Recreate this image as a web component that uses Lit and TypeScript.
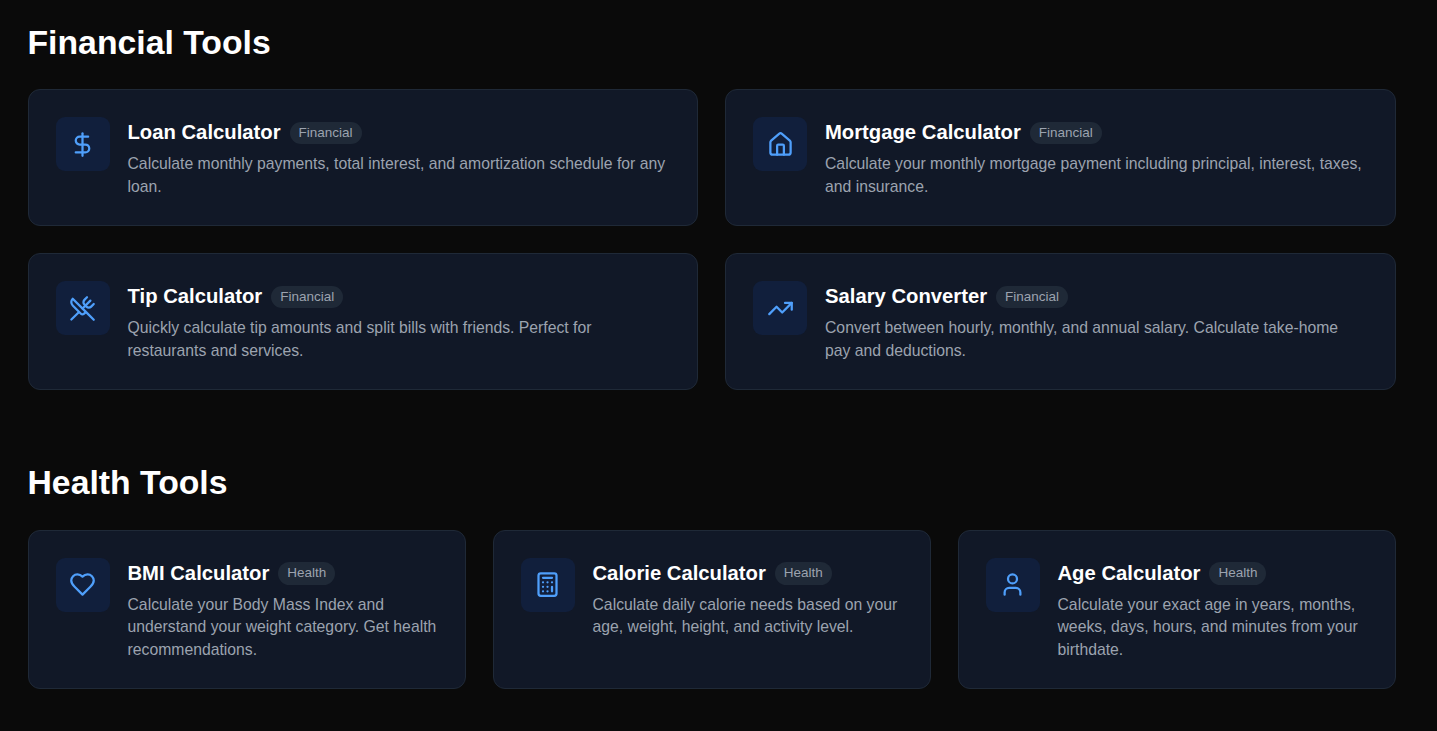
import { LitElement, html, css, svg } from "lit";
import { customElement } from "lit/decorators.js";

const icons = {
  dollar: svg`<line x1="12" y1="2" x2="12" y2="22"></line><path d="M17 5H9.5a3.5 3.5 0 0 0 0 7h5a3.5 3.5 0 0 1 0 7H6"></path>`,
  home: svg`<path d="M15 21v-8a1 1 0 0 0-1-1h-4a1 1 0 0 0-1 1v8"></path><path d="M3 10a2 2 0 0 1 .709-1.528l7-5.999a2 2 0 0 1 2.582 0l7 5.999A2 2 0 0 1 21 10v9a2 2 0 0 1-2 2H5a2 2 0 0 1-2-2z"></path>`,
  utensils: svg`<path d="m16 2-2.3 2.3a3 3 0 0 0 0 4.2l1.8 1.8a3 3 0 0 0 4.2 0L22 8"></path><path d="M15 15 3.3 3.3a4.2 4.2 0 0 0 0 6l7.3 7.3c.7.7 2 .7 2.8 0L15 15Zm0 0 7 7"></path><path d="m2.1 21.8 6.4-6.3"></path><path d="m19 5-7 7"></path>`,
  trending: svg`<polyline points="22 7 13.5 15.5 8.5 10.5 2 17"></polyline><polyline points="16 7 22 7 22 13"></polyline>`,
  heart: svg`<path d="M19 14c1.49-1.46 3-3.21 3-5.5A5.5 5.5 0 0 0 16.5 3c-1.76 0-3 .5-4.5 2-1.5-1.5-2.74-2-4.5-2A5.5 5.5 0 0 0 2 8.5c0 2.3 1.5 4.05 3 5.5l7 7Z"></path>`,
  calc: svg`<rect width="16" height="20" x="4" y="2" rx="2"></rect><line x1="8" x2="16" y1="6" y2="6"></line><line x1="16" x2="16" y1="14" y2="18"></line><path d="M16 10h.01"></path><path d="M12 10h.01"></path><path d="M8 10h.01"></path><path d="M12 14h.01"></path><path d="M8 14h.01"></path><path d="M12 18h.01"></path><path d="M8 18h.01"></path>`,
  user: svg`<path d="M19 21v-2a4 4 0 0 0-4-4H9a4 4 0 0 0-4 4v2"></path><circle cx="12" cy="7" r="4"></circle>`,
};

type Tool = { name: string; tag: string; desc: string; icon: keyof typeof icons };

const financial: Tool[] = [
  { name: "Loan Calculator", tag: "Financial", icon: "dollar", desc: "Calculate monthly payments, total interest, and amortization schedule for any loan." },
  { name: "Mortgage Calculator", tag: "Financial", icon: "home", desc: "Calculate your monthly mortgage payment including principal, interest, taxes, and insurance." },
  { name: "Tip Calculator", tag: "Financial", icon: "utensils", desc: "Quickly calculate tip amounts and split bills with friends. Perfect for restaurants and services." },
  { name: "Salary Converter", tag: "Financial", icon: "trending", desc: "Convert between hourly, monthly, and annual salary. Calculate take-home pay and deductions." },
];

const health: Tool[] = [
  { name: "BMI Calculator", tag: "Health", icon: "heart", desc: "Calculate your Body Mass Index and understand your weight category. Get health recommendations." },
  { name: "Calorie Calculator", tag: "Health", icon: "calc", desc: "Calculate daily calorie needs based on your age, weight, height, and activity level." },
  { name: "Age Calculator", tag: "Health", icon: "user", desc: "Calculate your exact age in years, months, weeks, days, hours, and minutes from your birthdate." },
];

@customElement("tool-card")
export class ToolCard extends LitElement {
  static override properties = { tool: { attribute: false } };
  declare tool: Tool;

  static override styles = css`
    :host {
      display: flex;
    }
    .card {
      flex: 1;
      display: flex;
      gap: 18px;
      padding: 27px;
      background: #111827;
      border: 1px solid #1f2937;
      border-radius: 12px;
    }
    .icon {
      flex: none;
      width: 54px;
      height: 54px;
      display: flex;
      align-items: center;
      justify-content: center;
      background: #111f3c;
      border-radius: 9px;
    }
    svg {
      width: 27px;
      height: 27px;
      fill: none;
      stroke: #4f9ffb;
      stroke-width: 2;
      stroke-linecap: round;
      stroke-linejoin: round;
    }
    .head {
      display: flex;
      align-items: center;
      gap: 9px;
      margin-bottom: 4.5px;
    }
    h3 {
      margin: 0;
      font-size: 20.25px;
      line-height: 31.5px;
      font-weight: 700;
      color: #fff;
    }
    .tag {
      font-size: 13.5px;
      line-height: 18px;
      padding: 2.25px 9px;
      border-radius: 999px;
      background: #1f2937;
      color: #9ca3af;
    }
    p {
      margin: 0;
      font-size: 15.75px;
      line-height: 22.5px;
      color: #9ca3af;
    }
  `;

  override render() {
    const t = this.tool;
    return html`<div class="card">
      <div class="icon"><svg viewBox="0 0 24 24">${icons[t.icon]}</svg></div>
      <div>
        <div class="head"><h3>${t.name}</h3><span class="tag">${t.tag}</span></div>
        <p>${t.desc}</p>
      </div>
    </div>`;
  }
}

@customElement("app-root")
export class AppRoot extends LitElement {
  static override styles = css`
    :host {
      display: block;
      height: 731px;
      overflow: hidden;
      background: #0a0a0a;
      font-family: "Liberation Sans", Arial, sans-serif;
    }
    main {
      padding: 21.5px 41.5px 0 27.5px;
    }
    h2 {
      margin: 0 0 27px;
      font-size: 33.75px;
      line-height: 40.5px;
      font-weight: 700;
      color: #fff;
    }
    .grid {
      display: grid;
      gap: 27px;
      margin-bottom: 72px;
    }
    .two {
      grid-template-columns: repeat(2, 1fr);
    }
    .three {
      grid-template-columns: repeat(3, 1fr);
    }
  `;

  override render() {
    return html`<main>
      <h2>Financial Tools</h2>
      <div class="grid two">${financial.map((t) => html`<tool-card .tool=${t}></tool-card>`)}</div>
      <h2>Health Tools</h2>
      <div class="grid three">${health.map((t) => html`<tool-card .tool=${t}></tool-card>`)}</div>
    </main>`;
  }
}
